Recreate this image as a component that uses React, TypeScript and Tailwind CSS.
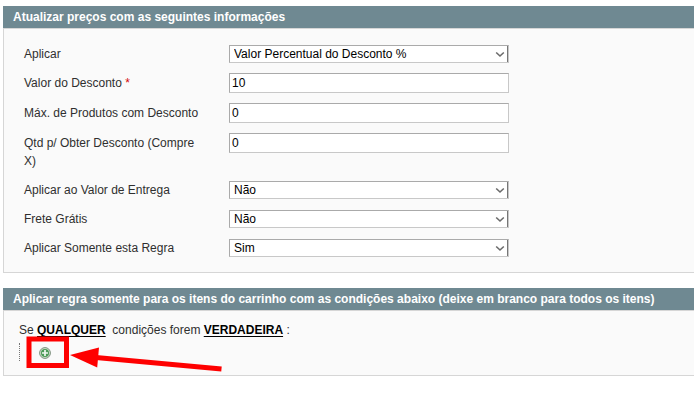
import type { ReactNode } from 'react'
import { useState } from 'react'

interface FieldRowProps {
  id: string
  label: string
  required?: boolean
  children: ReactNode
}

interface SelectFieldProps {
  id: string
  options: string[]
  initial: string
}

function FieldRow({ id, label, required, children }: FieldRowProps) {
  return (
    <div className="flex items-start">
      <label htmlFor={id} className="w-[205px] shrink-0 pt-px pr-5 leading-[18px]">
        {label}
        {required && <span className="text-[#d40707]"> *</span>}
      </label>
      <div className="w-[280px]">{children}</div>
    </div>
  )
}

function TextField({ id, initial }: { id: string; initial: string }) {
  const [value, setValue] = useState(initial)

  return (
    <input
      id={id}
      type="text"
      value={value}
      onChange={(e) => setValue(e.target.value)}
      className="block h-5 w-full border border-[#aaa] border-r-[#c8c8c8] border-b-[#c8c8c8] bg-white px-0.5 text-black focus:outline-none"
    />
  )
}

function SelectField({ id, options, initial }: SelectFieldProps) {
  const [value, setValue] = useState(initial)

  return (
    <div className="relative mt-px">
      <select
        id={id}
        value={value}
        onChange={(e) => setValue(e.target.value)}
        className="block h-[18px] w-full appearance-none border border-[#aaa] border-r-[#c8c8c8] border-b-[#c8c8c8] bg-white pr-5 pl-1 leading-4 text-black shadow-[inset_-1px_0_0_#767676] focus:outline-none"
      >
        {options.map((option) => (
          <option key={option} value={option}>
            {option}
          </option>
        ))}
      </select>
      <svg
        className="pointer-events-none absolute top-1.5 right-1 h-[7px] w-[10px]"
        viewBox="0 0 10 7"
        fill="none"
        stroke="#6b6b6b"
        strokeWidth="1.6"
      >
        <path d="M1.2 1.5 L5 5 L8.8 1.5" />
      </svg>
    </div>
  )
}

function Section({ title, children }: { title: string; children: ReactNode }) {
  return (
    <section>
      <h2 className="bg-[#6f8992] px-2.5 text-[12px] leading-[22px] font-bold text-white">{title}</h2>
      <div className="border border-r-0 border-[#d6d6d6] bg-[#fafafa]">{children}</div>
    </section>
  )
}

function RuleLink({ href, children }: { href: string; children: ReactNode }) {
  return (
    <a
      href={href}
      className="font-bold text-black underline decoration-1 underline-offset-2 [text-decoration-skip-ink:none]"
    >
      {children}
    </a>
  )
}

function AddIcon() {
  return (
    <svg className="size-3" viewBox="0 0 12 12">
      <circle cx="6" cy="6" r="5.4" fill="#cfe3cb" stroke="#7c8f7d" strokeWidth="1" />
      <circle cx="6" cy="6" r="4" fill="#4c9a58" />
      <path d="M6 3 V9 M3 6 H9" stroke="#f0f8ef" strokeWidth="1.7" />
    </svg>
  )
}

export default function App() {
  return (
    <main className="flex flex-col gap-[15px] pt-1.5 pl-[3px] font-['Liberation_Sans',Arial,sans-serif] text-[12px] text-[#2f2f2f]">
      <Section title="Atualizar preços com as seguintes informações">
        <form className="flex flex-col gap-2.5 px-5 py-[15px]">
          <FieldRow id="aplicar" label="Aplicar">
            <SelectField
              id="aplicar"
              options={['Valor Percentual do Desconto %']}
              initial="Valor Percentual do Desconto %"
            />
          </FieldRow>
          <FieldRow id="valor" label="Valor do Desconto" required>
            <TextField id="valor" initial="10" />
          </FieldRow>
          <FieldRow id="maximo" label="Máx. de Produtos com Desconto">
            <TextField id="maximo" initial="0" />
          </FieldRow>
          <FieldRow id="quantidade" label="Qtd p/ Obter Desconto (Compre X)">
            <TextField id="quantidade" initial="0" />
          </FieldRow>
          <FieldRow id="entrega" label="Aplicar ao Valor de Entrega">
            <SelectField id="entrega" options={['Não', 'Sim']} initial="Não" />
          </FieldRow>
          <FieldRow id="frete" label="Frete Grátis">
            <SelectField id="frete" options={['Não', 'Sim']} initial="Não" />
          </FieldRow>
          <FieldRow id="somente" label="Aplicar Somente esta Regra">
            <SelectField id="somente" options={['Não', 'Sim']} initial="Sim" />
          </FieldRow>
        </form>
      </Section>

      <Section title="Aplicar regra somente para os itens do carrinho com as condições abaixo (deixe em branco para todos os itens)">
        <div className="relative px-[15px] pt-2.5 pb-3.5">
          <p className="leading-[18px]">
            Se <RuleLink href="#qualquer">QUALQUER</RuleLink>
            &nbsp; condições forem <RuleLink href="#verdadeira">VERDADEIRA</RuleLink> :
          </p>
          <div className="mt-1 flex h-[18px] items-end border-l border-dotted border-[#777] pb-0.5 pl-[19px]">
            <button type="button" aria-label="Adicionar condição">
              <AddIcon />
            </button>
          </div>
          <svg
            className="pointer-events-none absolute top-6 left-5 h-10 w-[200px]"
            viewBox="0 0 200 40"
          >
            <rect x="5" y="4" width="37.5" height="26.5" fill="none" stroke="#fe0000" strokeWidth="5" />
            <path d="M46 20 L75 12.5 L73.2 32.5 Z" fill="#fe0000" />
            <path d="M72 22.5 L197.5 34" stroke="#fe0000" strokeWidth="5" />
          </svg>
        </div>
      </Section>
    </main>
  )
}
